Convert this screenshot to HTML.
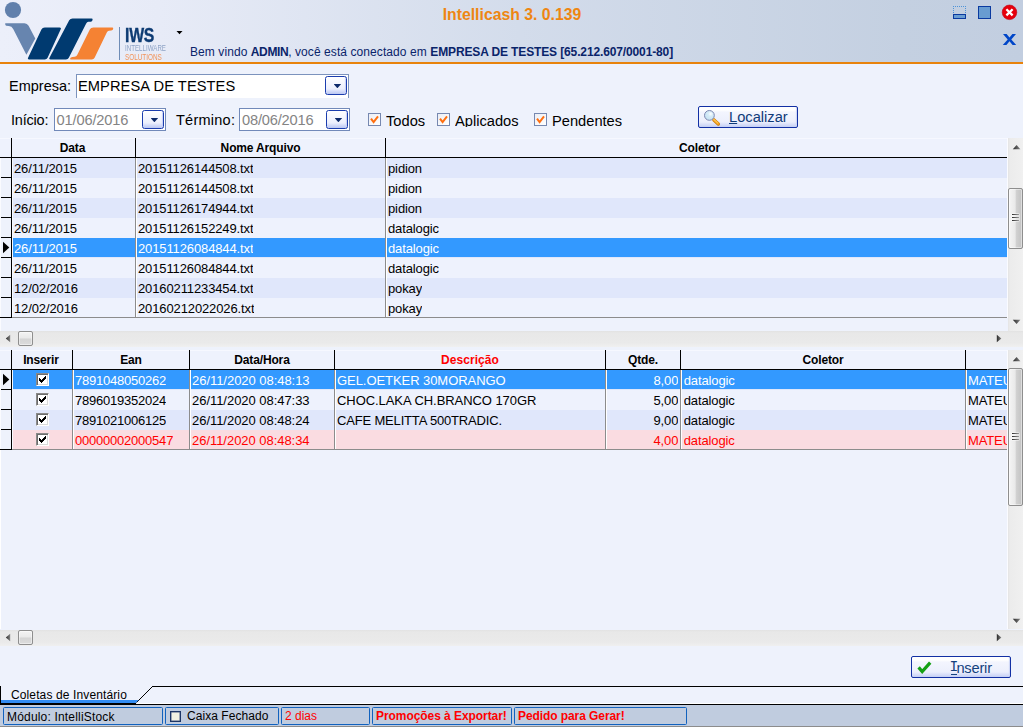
<!DOCTYPE html>
<html>
<head>
<meta charset="utf-8">
<title>Intellicash</title>
<style>
*{box-sizing:border-box;margin:0;padding:0}
html,body{width:1023px;height:727px;overflow:hidden}
body{position:relative;background:#eef2fc;font-family:"Liberation Sans",sans-serif;font-size:13px;color:#000}
.abs{position:absolute}
.t{position:absolute;white-space:nowrap;line-height:1}
/* header */
#hdr{left:0;top:0;width:1023px;height:62px;background:linear-gradient(90deg,#eceffa 0,#e7ebf7 160px,#d3dceb 520px,#c4d0e1 900px,#c2cee0 1023px)}
#oline{left:0;top:62px;width:1023px;height:2px;background:#e8830c}
/* grids */
.grid{position:absolute;left:0;width:1008px;overflow:hidden}
.gh{position:absolute;top:0;height:19px;font-weight:bold;font-size:12px;text-align:center;line-height:21px;white-space:nowrap;letter-spacing:-0.15px;overflow:hidden}
.vl{position:absolute;width:1px;background:#000}
.hl{position:absolute;height:1px;background:#000}
.row{position:absolute;left:13px;height:20px;width:994px}
.cell{position:absolute;top:1px;height:19px;line-height:19px;white-space:nowrap;font-size:13px;overflow:hidden;letter-spacing:-0.12px}
.odd{background:#e0e7fb}
.even{background:#eef2fd}
.sel{color:#fff}
.sel.odd{background:linear-gradient(#3399ff 19px,#e0e7fb 19px)}
.sel.even{background:linear-gradient(#3399ff 19px,#eef2fd 19px)}
.pink{background:#fadce1;color:#f00}
/* scrollbars */
.hs{position:absolute;left:0;width:1023px;height:16px;background:linear-gradient(180deg,#e2e2e2 0,#e8e8e8 2px,#eaeaea 12px,#f0f0f0 100%)}
.vs{position:absolute;left:1008px;width:15px;background:linear-gradient(90deg,#e4e4e4 0,#ececec 2px,#efefef 12px,#f1f1f1 100%)}
.thumb{position:absolute;border:1px solid #8e8e8e;border-radius:2px;box-shadow:inset 0 0 0 1px rgba(255,255,255,.45)}

.lbl{position:absolute;white-space:nowrap;line-height:1;font-size:14.5px;color:#000}
.ddb{position:absolute;width:22px;height:19px;border:1px solid #1b3dae;border-radius:2.5px;background:linear-gradient(180deg,#ffffff 0,#f8f9ff 25%,#eceffd 70%,#d3dbf9 84%,#bcc8f3 100%);box-shadow:inset -2px 0 1px -1px #c5cff5}
.ddb:after{content:"";position:absolute;left:7.6px;top:6.9px;width:7.6px;height:4.4px;background:#0d2a6b;clip-path:polygon(0 0,100% 0,50% 100%)}
.cb{position:absolute;width:13px;height:13px;border:1px solid #7688b0;background:linear-gradient(135deg,#eceef4,#ffffff)}
.ck{font-size:14.67px;height:13px;overflow:hidden;line-height:14.67px}

.gcb{position:absolute;left:23px;top:3px;width:13px;height:13px;background:#fff;border-top:1px solid #8a8a8a;border-left:1px solid #8a8a8a;border-right:1px solid #fff;border-bottom:1px solid #fff;box-shadow:inset 1px 1px 0 #6c6c6c,inset -1px -1px 0 #d9d9d9}
.gcb svg{position:absolute;left:1px;top:1px}

.sp{position:absolute;top:707px;height:18px;border:1px solid #1262be;border-radius:1.5px;background:#c0ccdf;font-size:12px}
.sp span{position:absolute;top:3px;white-space:nowrap;line-height:1}
.scb{position:absolute;left:3px;top:3px;width:11px;height:11px;border:1px solid #1c3566;box-shadow:inset 0 0 0 0.5px #4a5d86;background:#f2f1e2}
</style>
</head>
<body>
<svg width="0" height="0" style="position:absolute"><defs><linearGradient id="ag" x1="0" y1="0" x2="1" y2="0"><stop offset="0" stop-color="#2a2a2a"/><stop offset="1" stop-color="#858585"/></linearGradient></defs></svg>
<div id="hdr" class="abs"></div>
<div id="oline" class="abs"></div>
<svg class="abs" style="left:0;top:0" width="200" height="62" viewBox="0 0 200 62">
<circle cx="13" cy="10" r="8.1" fill="#6180ac"/>
<path d="M5.2 23.2 L24.5 23.2 Q27.2 23.2 28.6 25.8 L35.3 38.6 L26.4 54.8 L13.2 29 Q11.8 26.2 8.8 26 L6.2 25.8 Q5 25.6 5.2 23.2 Z" fill="#6785af"/>
<path d="M44.8 27.6 L59.6 27.6 Q61.6 27.6 60.6 29.6 L47.6 57.8 Q46.8 59.5 44.8 59.5 L29.2 59.5 Q27.2 59.5 28.2 57.6 L41.4 29.6 Q42.4 27.6 44.8 27.6 Z" fill="#003a70"/>
<path d="M72.6 18.4 L91.6 18.4 Q92.8 18.4 92.6 19.8 Q92.4 21.6 90.6 21.7 L88.4 21.8 Q87 22 86.2 23.6 L68.8 57.8 Q68 59.5 66 59.5 L50.6 59.5 Q48.6 59.5 49.6 57.6 L69.2 20.2 Q70.2 18.4 72.6 18.4 Z" fill="#003a70"/>
<path d="M93.4 27.4 L112.2 27.4 Q113.4 27.4 113.2 28.8 Q113 30.5 111.2 30.6 L109 30.7 Q107.6 30.9 106.8 32.5 L94.6 57.8 Q93.8 59.5 91.8 59.5 L71 59.5 Q69.8 59.5 70.2 58.2 Q70.6 57 72.4 56.9 L74.6 56.8 Q76.4 56.6 77.2 55 L89.8 29.4 Q90.8 27.4 93.4 27.4 Z" fill="#f58233"/>
<rect x="119" y="27" width="1" height="33" fill="#6f8cb6"/>
<path d="M176.5 31 L182.5 31 L179.5 34.2 Z" fill="#000"/>
</svg>
<div class="t" style="left:125px;top:24.6px;font-size:20px;font-weight:bold;color:#0d3b73;-webkit-text-stroke:0.35px #0d3b73;transform:scaleX(0.79);transform-origin:0 0;letter-spacing:-0.3px">IWS</div>
<div class="t" style="left:125px;top:44px;font-size:9px;color:#8ea3c6;transform:scaleX(0.687);transform-origin:0 0">INTELLIWARE</div>
<div class="t" style="left:125px;top:52.5px;font-size:9px;color:#f2945a;transform:scaleX(0.707);transform-origin:0 0">SOLUTIONS</div>

<div class="t" id="title" style="left:312px;width:400px;text-align:center;top:7px;font-size:15.8px;font-weight:bold;color:#ee8612">Intellicash 3. 0.139</div>
<div class="t" id="welcome" style="left:190px;top:46px;font-size:12px;color:#0a246a;letter-spacing:0.08px">Bem vindo <b style="letter-spacing:-0.4px">ADMIN</b>, você está conectado em <b style="letter-spacing:-0.13px">EMPRESA DE TESTES [65.212.607/0001-80]</b></div>
<svg class="abs" style="left:945px;top:0" width="78" height="62" viewBox="945 0 78 62">
<g fill="#4f94d8" shape-rendering="crispEdges"><rect x="953" y="6" width="1" height="1"/><rect x="955" y="6" width="1" height="1"/><rect x="957" y="6" width="1" height="1"/><rect x="959" y="6" width="1" height="1"/><rect x="961" y="6" width="1" height="1"/><rect x="963" y="6" width="1" height="1"/><rect x="965" y="6" width="1" height="1"/><rect x="953" y="8" width="1" height="1"/><rect x="965" y="8" width="1" height="1"/><rect x="953" y="10" width="1" height="1"/><rect x="965" y="10" width="1" height="1"/><rect x="953" y="12" width="1" height="1"/><rect x="965" y="12" width="1" height="1"/></g>
<rect x="953.5" y="14.5" width="12" height="4" fill="#6a9dd2" stroke="#0a3aa0" stroke-width="1"/>
<rect x="978.5" y="6.5" width="12" height="12" fill="#689cd1" stroke="#0a3aa0" stroke-width="1"/>
<circle cx="1009.5" cy="12.3" r="7.3" fill="#e6000c" stroke="#c00010" stroke-width="0.6"/>
<path d="M1006.4 9.2 L1012.6 15.4 M1012.6 9.2 L1006.4 15.4" stroke="#fff" stroke-width="2.3" stroke-linecap="butt"/>
<path d="M1003 34 L1006.6 34 L1009.5 37.6 L1012.4 34 L1016 34 L1011.3 39.5 L1016.2 45 L1012.6 45 L1009.5 41.3 L1006.4 45 L1002.8 45 L1007.7 39.5 Z" fill="#0046c8"/>
</svg>

<div class="lbl" id="lemp" style="left:9px;top:79px">Empresa:</div>
<div class="abs" style="left:76px;top:74px;width:273px;height:24px;background:#fff;border:1px solid #7c93bd;border-bottom:none"></div>
<div class="t" id="cemp" style="left:78px;top:79px;font-size:14.67px;letter-spacing:0.07px">EMPRESA DE TESTES</div>
<div class="ddb" style="left:325px;top:76px"></div>
<div class="lbl" id="lini" style="left:11px;top:113px;letter-spacing:-0.2px">Início:</div>
<div class="abs" style="left:54px;top:108px;width:112px;height:23px;background:#fff;border:1px solid #7189b9"></div>
<div class="t" id="d1" style="left:56.5px;top:113px;font-size:14.67px;color:#848484;letter-spacing:-0.15px">01/06/2016</div>
<div class="ddb" style="left:142px;top:110px"></div>
<div class="lbl" id="lter" style="left:176px;top:113px;letter-spacing:0.25px">Término:</div>
<div class="abs" style="left:239px;top:108px;width:111px;height:23px;background:#fff;border:1px solid #7189b9"></div>
<div class="t" id="d2" style="left:242px;top:113px;font-size:14.67px;color:#848484;letter-spacing:-0.2px">08/06/2016</div>
<div class="ddb" style="left:326px;top:110px"></div>
<div class="cb" style="left:368px;top:113px"><svg width="11" height="11" viewBox="0 0 11 11" style="position:absolute;left:0;top:0"><path d="M2 4.6 L4.6 8 L9 2.4" fill="none" stroke="#ff6f10" stroke-width="2"/></svg></div>
<div class="lbl ck" id="ltod" style="left:386px;top:114px">Todos</div>
<div class="cb" style="left:437px;top:113px"><svg width="11" height="11" viewBox="0 0 11 11" style="position:absolute;left:0;top:0"><path d="M2 4.6 L4.6 8 L9 2.4" fill="none" stroke="#ff6f10" stroke-width="2"/></svg></div>
<div class="lbl ck" id="lapl" style="left:455px;top:114px">Aplicados</div>
<div class="cb" style="left:534px;top:113px"><svg width="11" height="11" viewBox="0 0 11 11" style="position:absolute;left:0;top:0"><path d="M2 4.6 L4.6 8 L9 2.4" fill="none" stroke="#ff6f10" stroke-width="2"/></svg></div>
<div class="lbl ck" id="lpen" style="left:552px;top:114px">Pendentes</div>
<div class="abs" id="bloc" style="left:698px;top:106px;width:100px;height:22px;border:1px solid #1230a4;border-radius:2px;background:linear-gradient(180deg,#ffffff 0,#ffffff 3px,#f3f5fe 5px,#eceffc 15px,#dbe1f9 17px,#c4cff4 20px);box-shadow:inset -2px 0 1px -1px #ccd5f6"></div>
<svg class="abs" style="left:700px;top:107px" width="24" height="20" viewBox="700 107 24 20">
<defs><radialGradient id="lens" cx="0.62" cy="0.35" r="0.7"><stop offset="0" stop-color="#ffffff"/><stop offset="0.35" stop-color="#d6ecf8"/><stop offset="1" stop-color="#c2e0f0"/></radialGradient></defs>
<path d="M713.9 119.9 L718.3 124" stroke="#c87810" stroke-width="3.4" stroke-linecap="round"/>
<path d="M713.7 119.6 L718.1 123.7" stroke="#f5a51c" stroke-width="2.4" stroke-linecap="round"/>
<path d="M713.6 119.2 L717.6 122.9" stroke="#ffd884" stroke-width="0.9" stroke-linecap="round"/>
<circle cx="709.4" cy="115.4" r="4.9" fill="url(#lens)" stroke="#7e88b2" stroke-width="1"/>
</svg>
<div class="lbl" id="tloc" style="left:729px;top:110px;color:#0f3a78;font-size:14.67px"><u>L</u>ocalizar</div>
<div class="grid" id="g1" style="top:138px;height:180px">
<div class="gh" style="left:0;width:1007px;background:#eef2fd"></div><div class="hl" style="left:0;top:0;width:1007px;background:#f6f8ff"></div>
<div class="gh" style="left:11px;width:123px">Data</div>
<div class="gh" style="left:136px;width:249px">Nome Arquivo</div>
<div class="gh" style="left:386px;width:621px;padding-left:6px">Coletor</div>
<div class="vl" style="left:11px;top:0;height:19px"></div>
<div class="vl" style="left:135px;top:0;height:19px"></div>
<div class="vl" style="left:385px;top:0;height:19px"></div>
<div class="hl" style="left:0;top:19px;width:1007px"></div>
<div class="row odd" style="top:20px"><div class="cell" style="left:1px">26/11/2015</div><div class="cell" style="left:125px">20151126144508.txt</div><div class="cell" style="left:375px">pidion</div></div>
<div class="row even" style="top:40px"><div class="cell" style="left:1px">26/11/2015</div><div class="cell" style="left:125px">20151126144508.txt</div><div class="cell" style="left:375px">pidion</div></div>
<div class="row odd" style="top:60px"><div class="cell" style="left:1px">26/11/2015</div><div class="cell" style="left:125px">20151126174944.txt</div><div class="cell" style="left:375px">pidion</div></div>
<div class="row even" style="top:80px"><div class="cell" style="left:1px">26/11/2015</div><div class="cell" style="left:125px">20151126152249.txt</div><div class="cell" style="left:375px">datalogic</div></div>
<div class="row sel odd" style="top:100px"><div class="cell" style="left:1px">26/11/2015</div><div class="cell" style="left:125px">20151126084844.txt</div><div class="cell" style="left:375px">datalogic</div></div>
<div class="row even" style="top:120px"><div class="cell" style="left:1px">26/11/2015</div><div class="cell" style="left:125px">20151126084844.txt</div><div class="cell" style="left:375px">datalogic</div></div>
<div class="row odd" style="top:140px"><div class="cell" style="left:1px">12/02/2016</div><div class="cell" style="left:125px">20160211233454.txt</div><div class="cell" style="left:375px">pokay</div></div>
<div class="row even" style="top:160px"><div class="cell" style="left:1px">12/02/2016</div><div class="cell" style="left:125px">20160212022026.txt</div><div class="cell" style="left:375px">pokay</div></div>
<div class="vl" style="left:11px;top:19px;height:161px"></div><div class="vl" style="left:12px;top:20px;height:159px;background:#f8faff"></div><div class="vl" style="left:0;top:20px;height:159px;background:#fafbff"></div><div class="vl" style="left:1007px;top:0;height:180px;background:#fafbff"></div>
<div class="vl" style="left:135px;top:20px;height:159px;background:#8c8c8c;box-shadow:1px 0 0 #fff"></div>
<div class="vl" style="left:385px;top:20px;height:159px;background:#8c8c8c;box-shadow:1px 0 0 #fff"></div>
<div class="hl" style="left:1px;top:39px;width:10px"></div>
<div class="hl" style="left:1px;top:59px;width:10px"></div>
<div class="hl" style="left:1px;top:79px;width:10px"></div>
<div class="hl" style="left:1px;top:99px;width:10px"></div>
<div class="hl" style="left:1px;top:119px;width:10px"></div>
<div class="hl" style="left:1px;top:139px;width:10px"></div>
<div class="hl" style="left:1px;top:159px;width:10px"></div>
<div class="hl" style="left:0;top:179px;width:12px"></div>
<div class="hl" style="left:12px;top:179px;width:995px;background:#8c8c8c"></div>
<svg class="abs" style="left:0;top:100px" width="12" height="20"><path d="M3 3.8 L9.3 9.5 L3 15.2 Z" fill="#000"/></svg>
</div>
<div class="vs" style="top:138px;height:193px"></div>
<svg class="abs" style="left:1008px;top:138px" width="15" height="193"><path d="M4.8 11.2 L12.4 11.2 L8.6 7 Z" fill="url(#ag)"/><path d="M4.8 181.8 L12.4 181.8 L8.6 186 Z" fill="url(#ag)"/></svg>
<div class="thumb" style="left:1008px;top:188px;width:15px;height:61px;background:linear-gradient(90deg,#f5f5f5 0,#e9e9e9 48%,#d2d2d2 54%,#c2c2c2 100%)"></div>
<div class="abs" style="left:1011px;top:213px;width:9px;height:9px;background:rgba(255,255,255,.45);border-radius:2px"></div><div class="abs grip" style="left:1012px;top:214px;width:7px;height:7px;background:linear-gradient(90deg,#2e2e2e,#9a9a9a);-webkit-mask-image:repeating-linear-gradient(180deg,#000 0,#000 1.3px,transparent 1.3px,transparent 3px);mask-image:repeating-linear-gradient(180deg,#000 0,#000 1.3px,transparent 1.3px,transparent 3px)"></div>
<div class="abs" style="left:0;top:318px;width:1px;height:13px;background:#fafbff"></div><div class="hs" style="top:331px"></div>
<svg class="abs" style="left:0;top:331px" width="1008" height="16"><path d="M10.2 3.8 L10.2 11.2 L5.8 7.5 Z" fill="url(#ag)"/><path d="M996.8 3.8 L996.8 11.2 L1001.4 7.5 Z" fill="url(#ag)"/></svg>
<div class="thumb" style="left:18px;top:331px;width:15px;height:15px;background:linear-gradient(180deg,#f3f3f3 0,#e9e9e9 48%,#d4d4d4 52%,#dcdcdc 100%)"></div>

<div class="grid" id="g2" style="top:350px;height:280px">
<div class="gh" style="left:0;width:1007px;background:#eef2fd"></div><div class="hl" style="left:0;top:0;width:1007px;background:#f6f8ff"></div>
<div class="gh" style="left:11px;width:60px;">Inserir</div>
<div class="gh" style="left:73px;width:116px;">Ean</div>
<div class="gh" style="left:190px;width:144px;">Data/Hora</div>
<div class="gh" style="left:335px;width:270px;color:#ff0000;letter-spacing:0.05px">Descrição</div>
<div class="gh" style="left:606px;width:74px;">Qtde.</div>
<div class="gh" style="left:681px;width:284px;">Coletor</div>
<div class="vl" style="left:11px;top:0;height:19px"></div>
<div class="vl" style="left:72px;top:0;height:19px"></div>
<div class="vl" style="left:189px;top:0;height:19px"></div>
<div class="vl" style="left:334px;top:0;height:19px"></div>
<div class="vl" style="left:605px;top:0;height:19px"></div>
<div class="vl" style="left:680px;top:0;height:19px"></div>
<div class="vl" style="left:965px;top:0;height:19px"></div>
<div class="hl" style="left:0;top:19px;width:1007px"></div>
<div class="row sel odd" style="top:20px"><span class="gcb"><svg width="11" height="11" viewBox="0 0 11 11" shape-rendering="crispEdges" fill="#000"><rect x="1" y="3" width="1" height="3"/><rect x="2" y="4" width="1" height="3"/><rect x="3" y="5" width="1" height="3"/><rect x="4" y="4" width="1" height="3"/><rect x="5" y="3" width="1" height="3"/><rect x="6" y="2" width="1" height="3"/><rect x="7" y="1" width="1" height="3"/></svg></span><div class="cell" style="left:62px;letter-spacing:-0.22px">7891048050262</div><div class="cell" style="left:179px;letter-spacing:-0.04px">26/11/2020 08:48:13</div><div class="cell" style="left:324px;letter-spacing:-0.06px">GEL.OETKER 30MORANGO</div><div class="cell" style="left:593px;width:72.3px;text-align:right">8,00</div><div class="cell" style="left:670.7px">datalogic</div><div class="cell" style="left:955px;width:39px">MATEUS</div></div>
<div class="row even" style="top:40px"><span class="gcb"><svg width="11" height="11" viewBox="0 0 11 11" shape-rendering="crispEdges" fill="#000"><rect x="1" y="3" width="1" height="3"/><rect x="2" y="4" width="1" height="3"/><rect x="3" y="5" width="1" height="3"/><rect x="4" y="4" width="1" height="3"/><rect x="5" y="3" width="1" height="3"/><rect x="6" y="2" width="1" height="3"/><rect x="7" y="1" width="1" height="3"/></svg></span><div class="cell" style="left:62px;letter-spacing:-0.22px">7896019352024</div><div class="cell" style="left:179px;letter-spacing:-0.04px">26/11/2020 08:47:33</div><div class="cell" style="left:324px;letter-spacing:-0.06px">CHOC.LAKA CH.BRANCO 170GR</div><div class="cell" style="left:593px;width:72.3px;text-align:right">5,00</div><div class="cell" style="left:670.7px">datalogic</div><div class="cell" style="left:955px;width:39px">MATEUS</div></div>
<div class="row odd" style="top:60px"><span class="gcb"><svg width="11" height="11" viewBox="0 0 11 11" shape-rendering="crispEdges" fill="#000"><rect x="1" y="3" width="1" height="3"/><rect x="2" y="4" width="1" height="3"/><rect x="3" y="5" width="1" height="3"/><rect x="4" y="4" width="1" height="3"/><rect x="5" y="3" width="1" height="3"/><rect x="6" y="2" width="1" height="3"/><rect x="7" y="1" width="1" height="3"/></svg></span><div class="cell" style="left:62px;letter-spacing:-0.22px">7891021006125</div><div class="cell" style="left:179px;letter-spacing:-0.04px">26/11/2020 08:48:24</div><div class="cell" style="left:324px;letter-spacing:-0.17px">CAFE MELITTA 500TRADIC.</div><div class="cell" style="left:593px;width:72.3px;text-align:right">9,00</div><div class="cell" style="left:670.7px">datalogic</div><div class="cell" style="left:955px;width:39px">MATEUS</div></div>
<div class="row pink" style="top:80px"><span class="gcb"><svg width="11" height="11" viewBox="0 0 11 11" shape-rendering="crispEdges" fill="#000"><rect x="1" y="3" width="1" height="3"/><rect x="2" y="4" width="1" height="3"/><rect x="3" y="5" width="1" height="3"/><rect x="4" y="4" width="1" height="3"/><rect x="5" y="3" width="1" height="3"/><rect x="6" y="2" width="1" height="3"/><rect x="7" y="1" width="1" height="3"/></svg></span><div class="cell" style="left:62px;letter-spacing:-0.22px">00000002000547</div><div class="cell" style="left:179px;letter-spacing:-0.04px">26/11/2020 08:48:34</div><div class="cell" style="left:324px;letter-spacing:-0.06px"></div><div class="cell" style="left:593px;width:72.3px;text-align:right">4,00</div><div class="cell" style="left:670.7px">datalogic</div><div class="cell" style="left:955px;width:39px">MATEUS</div></div>
<div class="vl" style="left:11px;top:19px;height:81px"></div><div class="vl" style="left:12px;top:20px;height:79px;background:#f8faff"></div><div class="vl" style="left:0;top:20px;height:79px;background:#fafbff"></div><div class="vl" style="left:1007px;top:0;height:279px;background:#fafbff"></div>
<div class="vl" style="left:72px;top:20px;height:79px;background:#8c8c8c;box-shadow:1px 0 0 #fff"></div>
<div class="vl" style="left:189px;top:20px;height:79px;background:#8c8c8c;box-shadow:1px 0 0 #fff"></div>
<div class="vl" style="left:334px;top:20px;height:79px;background:#8c8c8c;box-shadow:1px 0 0 #fff"></div>
<div class="vl" style="left:605px;top:20px;height:79px;background:#8c8c8c;box-shadow:1px 0 0 #fff"></div>
<div class="vl" style="left:680px;top:20px;height:79px;background:#8c8c8c;box-shadow:1px 0 0 #fff"></div>
<div class="vl" style="left:965px;top:20px;height:79px;background:#8c8c8c;box-shadow:1px 0 0 #fff"></div>
<div class="hl" style="left:1px;top:39px;width:10px"></div>
<div class="hl" style="left:1px;top:59px;width:10px"></div>
<div class="hl" style="left:1px;top:79px;width:10px"></div>
<div class="hl" style="left:0;top:99px;width:12px"></div>
<div class="hl" style="left:12px;top:99px;width:995px;background:#8c8c8c"></div>
<svg class="abs" style="left:0;top:20px" width="12" height="20"><path d="M3 3.8 L9.3 9.5 L3 15.2 Z" fill="#000"/></svg>
<div class="abs" style="left:0;top:100px;width:1px;height:179px;background:#fff"></div>
</div>
<div class="vs" style="top:350px;height:279px"></div>
<svg class="abs" style="left:1008px;top:350px" width="15" height="279"><path d="M4.8 11.2 L12.4 11.2 L8.6 7 Z" fill="url(#ag)"/><path d="M4.8 268.8 L12.4 268.8 L8.6 273 Z" fill="url(#ag)"/></svg>
<div class="thumb" style="left:1008px;top:368px;width:15px;height:138px;background:linear-gradient(90deg,#f5f5f5 0,#e9e9e9 48%,#d2d2d2 54%,#c2c2c2 100%)"></div>
<div class="abs" style="left:1011px;top:432px;width:9px;height:9px;background:rgba(255,255,255,.45);border-radius:2px"></div><div class="abs grip" style="left:1012px;top:433px;width:7px;height:7px;background:linear-gradient(90deg,#2e2e2e,#9a9a9a);-webkit-mask-image:repeating-linear-gradient(180deg,#000 0,#000 1.3px,transparent 1.3px,transparent 3px);mask-image:repeating-linear-gradient(180deg,#000 0,#000 1.3px,transparent 1.3px,transparent 3px)"></div>
<div class="hs" style="top:630px;width:1023px"></div>
<svg class="abs" style="left:0;top:630px" width="1008" height="16"><path d="M10.2 3.8 L10.2 11.2 L5.8 7.5 Z" fill="url(#ag)"/><path d="M996.8 3.8 L996.8 11.2 L1001.4 7.5 Z" fill="url(#ag)"/></svg>
<div class="thumb" style="left:18px;top:630px;width:15px;height:15px;background:linear-gradient(180deg,#f3f3f3 0,#e9e9e9 48%,#d4d4d4 52%,#dcdcdc 100%)"></div>

<div class="abs" id="bins" style="left:911px;top:656px;width:100px;height:22px;border:1px solid #1230a4;border-radius:2px;background:linear-gradient(180deg,#ffffff 0,#ffffff 3px,#f3f5fe 5px,#eceffc 15px,#dbe1f9 17px,#c4cff4 20px);box-shadow:inset -2px 0 1px -1px #ccd5f6"></div>
<svg class="abs" style="left:914px;top:658px" width="22" height="18" viewBox="914 658 22 18"><path d="M918.6 667.4 L922.2 671.6 L930.2 662.6" fill="none" stroke="#15a015" stroke-width="3.2"/></svg>
<div class="lbl" id="tinsI" style="left:949.5px;top:660px;color:#14427e;font-size:14.67px;font-family:'Liberation Mono',monospace">I</div>
<div class="abs" style="left:951px;top:674px;width:6px;height:1px;background:#14427e"></div>
<div class="lbl" id="tins" style="left:956.4px;top:661px;color:#14427e;font-size:14.67px;letter-spacing:-0.2px">nserir</div>
<div class="abs" style="left:152px;top:686px;width:871px;height:1px;background:#000"></div>
<svg class="abs" style="left:0;top:680px" width="160" height="24" viewBox="0 680 160 24"><path d="M152.5 686.5 L136.5 702.5" stroke="#000" stroke-width="1" fill="none"/><rect x="0" y="686" width="1" height="17" fill="#000"/><path d="M1 700 L138.6 700 L135.6 703 L1 703 Z" fill="#328cf2"/></svg>
<div class="t" id="ttab" style="left:11px;top:689px;font-size:12px;letter-spacing:0.12px">Coletas de Inventário</div>
<div class="abs" style="left:0;top:703px;width:136px;height:1px;background:#000"></div><div class="abs" style="left:137px;top:703px;width:886px;height:1px;background:#fff"></div><div class="abs" style="left:0;top:704px;width:1023px;height:23px;background:#c0ccdf;border-top:1px solid #000;border-bottom:1px solid #8c8c8c"></div>
<div class="sp" style="left:3px;width:160px"><span id="tmod" style="left:3px;letter-spacing:0.18px">Módulo: IntelliStock</span></div>
<div class="sp" style="left:165px;width:114px"><i class="scb" style="left:4px"></i><span id="tcx" style="left:21px;top:2px;letter-spacing:0.06px">Caixa Fechado</span></div>
<div class="sp" style="left:281px;width:89px"><span id="tdias" style="left:3px;top:2px;color:#f00">2 dias</span></div>
<div class="sp" style="left:372px;width:140px"><span id="tpro" style="left:3px;top:2px;color:#f00;font-weight:bold;letter-spacing:-0.06px">Promoções à Exportar!</span></div>
<div class="sp" style="left:514px;width:173px"><span id="tped" style="left:3px;top:2px;color:#f00;font-weight:bold;letter-spacing:-0.08px">Pedido para Gerar!</span></div>

</body>
</html>
